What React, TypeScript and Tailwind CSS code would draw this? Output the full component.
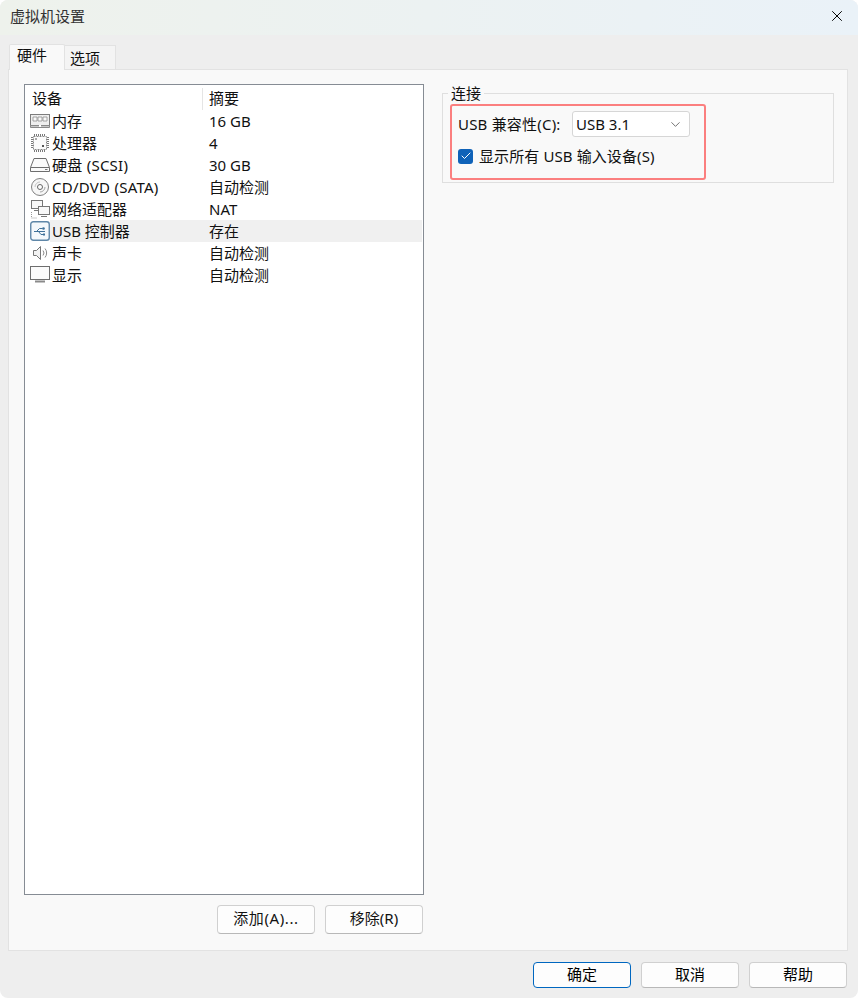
import { Check, ChevronDown, X } from "lucide-react";
import type { ReactNode } from "react";

const font = { fontFamily: '"Noto Sans", "Noto Sans CJK SC", sans-serif' };

function MemoryIcon() {
  return (
    <svg width="20" height="16" viewBox="0 0 20 16" fill="none">
      <rect x="0.5" y="1.5" width="19" height="11" fill="#efefef" stroke="#7d7d7d" />
      <path d="M3 4h4v4H3zM8 4h4v4H8zM13 4h4v4h-4z" fill="#fafafa" stroke="#8f8f8f" strokeWidth="0.8" />
      <path d="M.5 12.5h19v2H.5z" fill="#c8c8c8" stroke="#8a8a8a" />
      <path d="M9 12h2v2H9z" fill="#fff" />
    </svg>
  );
}

function CpuIcon() {
  return (
    <svg width="20" height="20" viewBox="0 0 20 20" fill="none">
      <rect x="3.5" y="3.5" width="13" height="13" fill="#fbfbfb" stroke="#8a8a8a" strokeDasharray="2 1" />
      <path d="M4.5 1v2M6.5 1v2M8.5 1v2M10.5 1v2M12.5 1v2M14.5 1v2M4.5 17v2M6.5 17v2M8.5 17v2M10.5 17v2M12.5 17v2M14.5 17v2M1 4.5h2M1 6.5h2M1 8.5h2M1 10.5h2M1 12.5h2M1 14.5h2M17 4.5h2M17 6.5h2M17 8.5h2M17 10.5h2M17 12.5h2M17 14.5h2" stroke="#7a7a7a" />
      <rect x="5" y="5" width="2" height="2" fill="#aaa" />
      <rect x="12" y="12" width="2" height="2" fill="#555" />
    </svg>
  );
}

function DiskIcon() {
  return (
    <svg width="20" height="16" viewBox="0 0 20 16" fill="none">
      <path d="M4 1.5h12l3.5 9v4H.5v-4z" fill="#fafafa" stroke="#6e6e6e" />
      <path d="M.5 10.5h19" stroke="#6e6e6e" />
      <path d="M15 12.5h2.5" stroke="#777" />
    </svg>
  );
}

function CdIcon() {
  return (
    <svg width="20" height="20" viewBox="0 0 20 20" fill="none">
      <circle cx="10" cy="10" r="8.5" fill="#f7f7f7" stroke="#808080" />
      <circle cx="10" cy="10" r="2.5" fill="#fff" stroke="#666" />
      <path d="M5 10a5 5 0 0 1 5-5" stroke="#c4c4c4" />
      <path d="M15 10a5 5 0 0 1-5 5" stroke="#a5a5a5" />
    </svg>
  );
}

function NetworkIcon() {
  return (
    <svg width="20" height="20" viewBox="0 0 20 20" fill="none">
      <rect x="1.5" y="1.5" width="11" height="8" fill="#f8f8f8" stroke="#777" />
      <path d="M4 11.5h6" stroke="#777" />
      <rect x="8.5" y="7.5" width="11" height="8" fill="#f8f8f8" stroke="#777" />
      <path d="M11 17.5h6" stroke="#777" />
      <path d="M1.5 13v6h6" stroke="#999" strokeDasharray="1 1" />
    </svg>
  );
}

function UsbIcon() {
  return (
    <svg width="20" height="20" viewBox="0 0 20 20" fill="none">
      <rect x="0.75" y="0.75" width="18.5" height="18.5" rx="2.5" fill="#f4f8fb" stroke="#5f87a8" strokeWidth="1.4" />
      <path d="M4 10.5h11M6.5 10.5l3-3h3M8.5 10.5l2.5 3h2" stroke="#3f7199" />
      <circle cx="13.5" cy="7.5" r="1.3" fill="#3f7199" />
      <rect x="13" y="12.5" width="2" height="2" fill="#3f7199" />
    </svg>
  );
}

function SoundIcon() {
  return (
    <svg width="20" height="18" viewBox="0 0 20 18" fill="none">
      <path d="M3.5 6.5h3l4-4v13l-4-4h-3z" fill="#f3f3f3" stroke="#777" />
      <path d="M13 6.5a4 4 0 0 1 0 5M15 4.5a7 7 0 0 1 0 9" stroke="#888" />
    </svg>
  );
}

function MonitorIcon() {
  return (
    <svg width="20" height="18" viewBox="0 0 20 18" fill="none">
      <rect x="0.5" y="0.5" width="19" height="13" fill="#fbfbfb" stroke="#6e6e6e" />
      <path d="M5 15.5h10" stroke="#8a8a8a" strokeWidth="2" />
    </svg>
  );
}

const devices: { icon: ReactNode; name: string; summary: string; selected?: boolean; wide?: boolean }[] = [
  { icon: <MemoryIcon />, name: "内存", summary: "16 GB" },
  { icon: <CpuIcon />, name: "处理器", summary: "4" },
  { icon: <DiskIcon />, name: "硬盘 (SCSI)", summary: "30 GB", wide: true },
  { icon: <CdIcon />, name: "CD/DVD (SATA)", summary: "自动检测", wide: true },
  { icon: <NetworkIcon />, name: "网络适配器", summary: "NAT" },
  { icon: <UsbIcon />, name: "USB 控制器", summary: "存在", selected: true },
  { icon: <SoundIcon />, name: "声卡", summary: "自动检测" },
  { icon: <MonitorIcon />, name: "显示", summary: "自动检测" },
];

function DialogButton({ label, primary }: { label: string; primary?: boolean }) {
  return (
    <button
      className={
        primary
          ? "h-[26px] w-[98px] rounded-[4px] border border-[#0067c0] bg-[#fdfdfd] pb-[2px] text-[15px] text-black"
          : "h-[26px] w-[98px] rounded-[4px] border border-[#d0d0d0] border-b-[#b8b8b8] bg-[#fdfdfd] pb-[2px] text-[15px] text-black"
      }
    >
      {label}
    </button>
  );
}

export default function App() {
  return (
    <div
      className="flex h-[998px] w-[858px] flex-col overflow-hidden rounded-[8px] bg-[#eeeeee] text-[15px] leading-[22px] text-[#111]"
      style={font}
    >
      {/* title bar */}
      <div className="flex h-[35px] shrink-0 items-center justify-between bg-[linear-gradient(90deg,#eef2ec,#eaf2f8)] pb-[4px] pl-[10px] pr-[12px]">
        <span className="text-[#333]">虚拟机设置</span>
        <X size={18} strokeWidth={1.3} className="text-black" />
      </div>

      {/* tabs */}
      <div className="flex h-[34px] shrink-0 items-end pl-[9px]">
        <div className="relative z-10 -mb-px flex h-[26px] w-[56px] items-start rounded-t-[2px] border border-b-0 border-[#e2e2e2] bg-[#f9f9f9] pl-[7px]">
          <span className="leading-[21px]">硬件</span>
        </div>
        <div className="flex h-[24px] w-[51px] items-start border border-b-0 border-l-0 border-[#e2e2e2] bg-[#f4f4f4] pl-[5px]">
          <span className="leading-[24px]">选项</span>
        </div>
      </div>

      {/* page */}
      <div className="ml-[8px] mr-[10px] flex h-[882px] shrink-0 gap-[18px] border border-[#e2e2e2] bg-[#f9f9f9] pl-[15px] pt-[14px]">
        <div className="flex w-[400px] shrink-0 flex-col">
          <div className="h-[811px] border border-[#868c94] bg-white pl-[5px] pt-[2px]">
            <div className="flex h-[23px] items-center">
              <span className="w-[172px] shrink-0 pb-[2px] pl-[2px]">设备</span>
              <span className="h-[22px] border-l border-[#e5e5e5] pl-[6px] leading-[20px]">摘要</span>
            </div>
            {devices.map((d) => (
              <div key={d.name} className="flex h-[22px] items-center">
                <span className="flex h-[22px] w-[20px] shrink-0 items-center justify-center">{d.icon}</span>
                <div className={d.selected ? "flex h-[22px] w-[372px] items-center bg-[#f0f0f0]" : "flex h-[22px] w-[372px] items-center"}>
                  <span className={d.wide ? "w-[159px] shrink-0 pl-[2px] tracking-[0.25px] whitespace-nowrap" : "w-[159px] shrink-0 pl-[2px] whitespace-nowrap"}>{d.name}</span>
                  <span>{d.summary}</span>
                </div>
              </div>
            ))}
          </div>
          <div className="mt-[10px] flex justify-end gap-[10px] pr-px">
            <button className="h-[29px] w-[98px] rounded-[4px] border border-[#d0d0d0] border-b-[#b8b8b8] bg-[#fdfdfd] pb-[3px] text-[15px] tracking-[0.6px]">添加(A)...</button>
            <button className="h-[29px] w-[98px] rounded-[4px] border border-[#d0d0d0] border-b-[#b8b8b8] bg-[#fdfdfd] pb-[3px] text-[15px]">移除(R)</button>
          </div>
        </div>

        {/* connection group */}
        <div className="relative mt-[9px] h-[90px] w-[392px] border border-[#dfdfdf]">
          <span className="absolute -top-[11px] left-[5px] bg-[#f9f9f9] px-[3px] leading-[20px]">连接</span>
          <div className="ml-[7px] mt-[10px] flex h-[76px] w-[256px] flex-col gap-[8px] rounded-[3px] border-2 border-[#fb7f7f] pl-[6px] pt-[5px]">
            <div className="flex h-[26px] items-center">
              <span className="w-[114px] shrink-0 tracking-[0.2px] whitespace-nowrap">USB 兼容性(C):</span>
              <div className="flex h-[26px] w-[118px] items-center justify-between rounded-[3px] border border-[#d6d6d6] bg-white pl-[3px] pr-[6px]">
                <span>USB 3.1</span>
                <ChevronDown size={15} strokeWidth={1.2} className="text-[#444]" />
              </div>
            </div>
            <div className="flex items-center gap-[6px]">
              <span className="flex h-[15px] w-[15px] items-center justify-center rounded-[3px] bg-[#0f62b8]">
                <Check size={12} strokeWidth={2} className="text-white" />
              </span>
              <span className="tracking-[0.1px] whitespace-nowrap">显示所有 USB 输入设备(S)</span>
            </div>
          </div>
        </div>
      </div>

      {/* footer */}
      <div className="flex flex-1 justify-end gap-[10px] pr-[11px] pt-[11px]">
        <DialogButton label="确定" primary />
        <DialogButton label="取消" />
        <DialogButton label="帮助" />
      </div>
    </div>
  );
}
